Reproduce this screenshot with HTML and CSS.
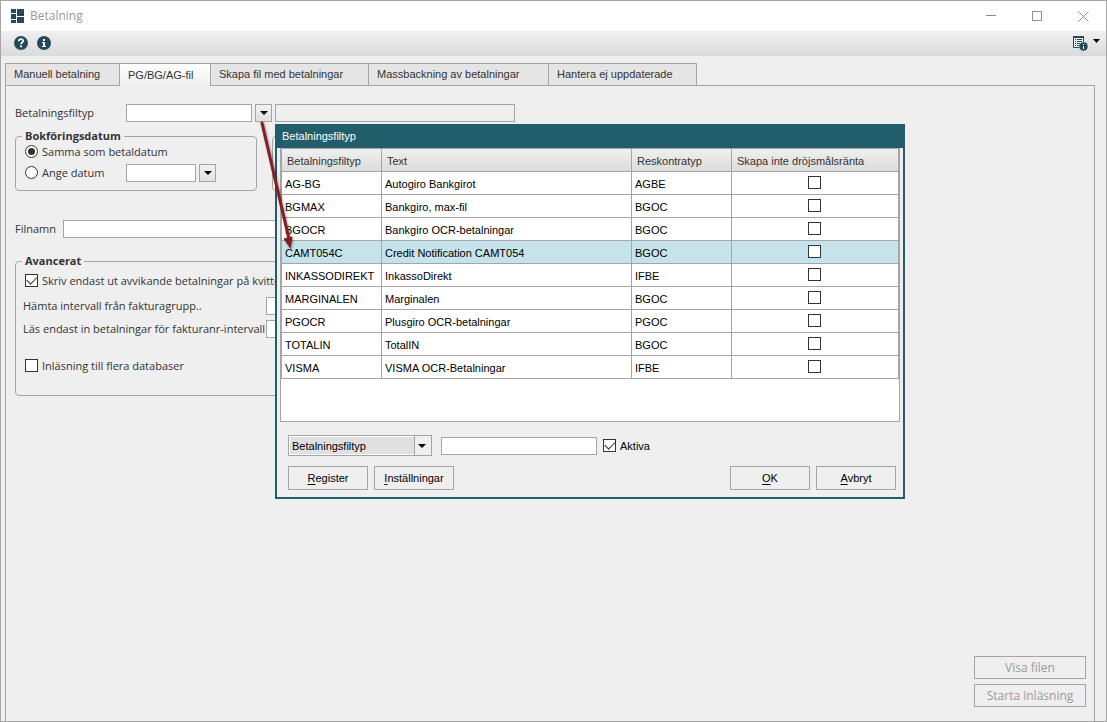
FILE: index.html
```html
<!DOCTYPE html>
<html lang="sv">
<head>
    <meta charset="UTF-8">
    <meta name="viewport" content="width=device-width, initial-scale=1.0">
    <title>Betalning</title>
    <link rel="stylesheet" href="styles.css">
</head>
<body>
    <div class="window">
        <header class="titlebar">
            <svg class="app-icon" width="13" height="14" viewBox="0 0 13 14" fill="#24495a">
                <path d="M0 0h5v4H0zM0 5h5v5H0zM0 11h5v3H0zM6 0h7v7H6zM6 8h7v6H6z"/>
            </svg>
            <h1 class="window-title">Betalning</h1>
            <div class="window-buttons">
                <button class="window-button" aria-label="Minimera">
                    <svg width="11" height="11" viewBox="0 0 11 11" stroke="#8c8c8c" fill="none"><path d="M0 4.5h10"/></svg>
                </button>
                <button class="window-button" aria-label="Maximera">
                    <svg width="11" height="11" viewBox="0 0 11 11" stroke="#8c8c8c" fill="none"><path d="M.5 .5h9v9h-9z"/></svg>
                </button>
                <button class="window-button" aria-label="Stäng">
                    <svg width="11" height="11" viewBox="0 0 11 11" stroke="#8c8c8c" fill="none"><path d="M.5 .5l10 10M10.5 .5l-10 10"/></svg>
                </button>
            </div>
        </header>

        <div class="toolbar">
            <button class="tool-button" aria-label="Hjälp">
                <svg width="14" height="14" viewBox="0 0 14 14">
                    <circle cx="7" cy="7" r="7" fill="#24495a"/>
                    <path d="M4.8 5.3c0-3 4.4-2.8 4.4-.3 0 1.5-2.2 1.5-2.2 3.2" fill="none" stroke="#fff" stroke-width="1.7"/>
                    <path d="M6 9.5h2v1.7H6z" fill="#fff"/>
                </svg>
            </button>
            <button class="tool-button" aria-label="Information">
                <svg width="14" height="14" viewBox="0 0 14 14">
                    <circle cx="7" cy="7" r="7" fill="#24495a"/>
                    <path d="M6 3h2v2H6zM5 6h3v4h1v1H5v-1h1V7H5z" fill="#fff"/>
                </svg>
            </button>
            <button class="tool-button tool-menu" aria-label="Visa logg">
                <svg width="15" height="15" viewBox="0 0 15 15">
                    <path d="M.5 1v10.5h10V1" fill="#f2f2f2" stroke="#24495a"/>
                    <path d="M0 0h11v2H0z" fill="#24495a"/>
                    <path d="M2 3.5h1M4 3.5h5M2 5.5h1M4 5.5h5M2 7.5h1M4 7.5h4M2 9.5h1M4 9.5h3" stroke="#24495a"/>
                    <circle cx="10.5" cy="10.5" r="4.5" fill="#24495a" stroke="#e2e2e2" stroke-width=".5"/>
                    <path d="M10 8h1v1h-1zM10 10h1v3h-1z" fill="#fff"/>
                </svg>
                <svg class="menu-arrow" width="7" height="4" viewBox="0 0 7 4"><path d="M0 0h7L3.5 4z"/></svg>
            </button>
        </div>

        <nav class="tabs">
            <button class="tab tab-manual">Manuell betalning</button>
            <button class="tab tab-file active">PG/BG/AG-fil</button>
            <button class="tab tab-create">Skapa fil med betalningar</button>
            <button class="tab tab-mass">Massbackning av betalningar</button>
            <button class="tab tab-pending">Hantera ej uppdaterade</button>
        </nav>

        <main class="pane">
            <div class="row">
                <label class="type-label" for="file-type">Betalningsfiltyp</label>
                <input class="field type-field" type="text" id="file-type">
                <button class="drop" id="open-types" aria-label="Välj betalningsfiltyp"></button>
                <input class="field type-name" type="text" aria-label="Namn på filtyp" readonly>
            </div>

            <div class="groups">
                <fieldset class="group date-group">
                    <legend>Bokföringsdatum</legend>
                    <div class="option">
                        <input class="radio" type="radio" name="date" id="same-date" checked>
                        <label for="same-date">Samma som betaldatum</label>
                    </div>
                    <div class="option">
                        <input class="radio" type="radio" name="date" id="set-date">
                        <label class="date-label" for="set-date">Ange datum</label>
                        <div class="row">
                            <input class="field date-field" type="text" aria-label="Datum">
                            <button class="drop" aria-label="Välj datum"></button>
                        </div>
                    </div>
                </fieldset>
                <fieldset class="group side-group"></fieldset>
            </div>

            <div class="row file-row">
                <label class="file-label" for="file-name">Filnamn</label>
                <input class="field file-field" type="text" id="file-name">
            </div>

            <fieldset class="group advanced">
                <legend>Avancerat</legend>
                <div class="option">
                    <input class="check" type="checkbox" id="deviating" checked>
                    <label for="deviating">Skriv endast ut avvikande betalningar på kvittens</label>
                </div>
                <div class="ranges">
                    <div class="range">
                        <label class="range-label" for="group-from">Hämta intervall från fakturagrupp..</label>
                        <input class="field" type="text" id="group-from">
                    </div>
                    <div class="range">
                        <label class="range-label" for="number-from">Läs endast in betalningar för fakturanr-intervall</label>
                        <input class="field" type="text" id="number-from">
                    </div>
                </div>
                <div class="option">
                    <input class="check" type="checkbox" id="databases">
                    <label for="databases">Inläsning till flera databaser</label>
                </div>
            </fieldset>

            <div class="actions">
                <button class="button" disabled>Visa filen</button>
                <button class="button" disabled>Starta inläsning</button>
            </div>
        </main>
    </div>

    <section class="dialog" role="dialog" aria-labelledby="dialog-title">
        <h2 class="dialog-title" id="dialog-title">Betalningsfiltyp</h2>
        <div class="list">
            <table class="types">
                <colgroup>
                    <col class="col-type">
                    <col class="col-text">
                    <col class="col-ledger">
                    <col>
                </colgroup>
                <thead>
                    <tr>
                        <th>Betalningsfiltyp</th>
                        <th>Text</th>
                        <th>Reskontratyp</th>
                        <th>Skapa inte dröjsmålsränta</th>
                    </tr>
                </thead>
                <tbody>
                    <tr>
                        <td>AG-BG</td><td>Autogiro Bankgirot</td><td>AGBE</td>
                        <td><input class="check" type="checkbox" aria-label="Skapa inte dröjsmålsränta, AG-BG"></td>
                    </tr>
                    <tr>
                        <td>BGMAX</td><td>Bankgiro, max-fil</td><td>BGOC</td>
                        <td><input class="check" type="checkbox" aria-label="Skapa inte dröjsmålsränta, BGMAX"></td>
                    </tr>
                    <tr>
                        <td>BGOCR</td><td>Bankgiro OCR-betalningar</td><td>BGOC</td>
                        <td><input class="check" type="checkbox" aria-label="Skapa inte dröjsmålsränta, BGOCR"></td>
                    </tr>
                    <tr class="selected">
                        <td>CAMT054C</td><td>Credit Notification CAMT054</td><td>BGOC</td>
                        <td><input class="check" type="checkbox" aria-label="Skapa inte dröjsmålsränta, CAMT054C"></td>
                    </tr>
                    <tr>
                        <td>INKASSODIREKT</td><td>InkassoDirekt</td><td>IFBE</td>
                        <td><input class="check" type="checkbox" aria-label="Skapa inte dröjsmålsränta, INKASSODIREKT"></td>
                    </tr>
                    <tr>
                        <td>MARGINALEN</td><td>Marginalen</td><td>BGOC</td>
                        <td><input class="check" type="checkbox" aria-label="Skapa inte dröjsmålsränta, MARGINALEN"></td>
                    </tr>
                    <tr>
                        <td>PGOCR</td><td>Plusgiro OCR-betalningar</td><td>PGOC</td>
                        <td><input class="check" type="checkbox" aria-label="Skapa inte dröjsmålsränta, PGOCR"></td>
                    </tr>
                    <tr>
                        <td>TOTALIN</td><td>TotalIN</td><td>BGOC</td>
                        <td><input class="check" type="checkbox" aria-label="Skapa inte dröjsmålsränta, TOTALIN"></td>
                    </tr>
                    <tr>
                        <td>VISMA</td><td>VISMA OCR-Betalningar</td><td>IFBE</td>
                        <td><input class="check" type="checkbox" aria-label="Skapa inte dröjsmålsränta, VISMA"></td>
                    </tr>
                </tbody>
            </table>
        </div>
        <div class="filter">
            <select class="filter-select" aria-label="Sök på">
                <option>Betalningsfiltyp</option>
                <option>Text</option>
                <option>Reskontratyp</option>
            </select>
            <input class="field filter-field" type="text" aria-label="Sök">
            <input class="check" type="checkbox" id="active-only" checked>
            <label for="active-only">Aktiva</label>
        </div>
        <div class="dialog-buttons">
            <button class="button"><u>R</u>egister</button>
            <button class="button"><u>I</u>nställningar</button>
            <button class="button push"><u>O</u>K</button>
            <button class="button"><u>A</u>vbryt</button>
        </div>
    </section>

    <svg class="pointer" width="40" height="132" viewBox="0 0 40 132">
        <path d="M4 3L31 119" stroke="#8c1a22" stroke-width="3" stroke-linecap="round"/>
        <path d="M25.5 118.5l9-2L32.5 129z" fill="#8c1a22"/>
    </svg>
</body>
</html>
```
FILE: styles.css
```css
* {
    box-sizing: border-box;
}

body {
    margin: 0;
    position: relative;
    font-family: "Open Sans", "Noto Sans", sans-serif;
    font-size: 11px;
    line-height: 16px;
    color: #333;
    background-color: #efefef;
}

button, input, select {
    margin: 0;
    padding: 0;
    font: inherit;
    color: inherit;
    border-radius: 0;
}

label {
    white-space: nowrap;
}

.window {
    display: flex;
    flex-direction: column;
    min-height: 100vh;
    border: 1px solid #a5a5a5;
}

/* Title bar and toolbar */
.titlebar {
    display: flex;
    align-items: center;
    height: 30px;
    padding-left: 10px;
    background-color: #fff;
}

.window-title {
    margin: 0 0 0 6px;
    font-size: 12px;
    font-weight: 400;
    color: #999;
}

.window-buttons {
    display: flex;
    margin-left: auto;
}

.window-button {
    display: flex;
    align-items: center;
    justify-content: center;
    width: 46px;
    height: 28px;
    border: none;
    background: none;
}

.toolbar {
    display: flex;
    align-items: center;
    gap: 9px;
    height: 25px;
    padding: 0 6px 1px 13px;
    background: linear-gradient(#f0f0f0, #dadada);
}

.tool-button {
    display: flex;
    border: none;
    background: none;
}

.tool-menu {
    gap: 5px;
    margin-left: auto;
}

.menu-arrow {
    margin-top: 3px;
}

/* Tabs */
.tabs {
    display: flex;
    margin: 7px 11px 0 4px;
}

.tab {
    height: 23px;
    padding: 0 8px 2px;
    border: 1px solid #a5a5a5;
    border-right: none;
    background-color: #e5e5e5;
    font-family: "Liberation Sans", Arial, sans-serif;
    text-align: left;
    white-space: nowrap;
}

.tab:last-child {
    border-right: 1px solid #a5a5a5;
}

.tab.active {
    position: relative;
    padding-bottom: 0;
    border-bottom: none;
    background: linear-gradient(#fff, #efefef);
}

.tab-manual { width: 114px; }
.tab-file { width: 91px; }
.tab-create { width: 158px; }
.tab-mass { width: 180px; }
.tab-pending { width: 149px; }

.pane {
    display: flex;
    flex-direction: column;
    flex: 1;
    margin: -1px 11px 0 4px;
    padding: 18px 8px 14px 9px;
    border: 1px solid #a5a5a5;
    border-bottom: none;
}

/* Form */
.row {
    display: flex;
    align-items: center;
    gap: 3px;
}

.field {
    width: 126px;
    height: 18px;
    padding: 0 3px;
    border: 1px solid #a5a5a5;
    background-color: #fff;
}

.field:read-only {
    background-color: #efefef;
}

.drop {
    width: 17px;
    height: 18px;
    border: 1px solid #a5a5a5;
    background: url("data:image/svg+xml,%3Csvg xmlns='http://www.w3.org/2000/svg' width='8' height='4'%3E%3Cpath d='M0 0h8L4 4z'/%3E%3C/svg%3E") center no-repeat, linear-gradient(#f2f2f2, #e0e0e0);
}

.type-label {
    width: 108px;
}

.type-name {
    width: 240px;
}

.groups {
    display: flex;
    gap: 15px;
    margin-top: 6px;
}

.group {
    margin: 0;
    padding: 0 7px;
    border: 1px solid #a5a5a5;
    border-radius: 4px;
}

.group legend {
    margin-left: -1px;
    padding: 0 3px;
    font-weight: 700;
}

.option {
    display: flex;
    align-items: center;
    height: 21px;
    gap: 4px;
    padding-left: 2px;
}

.date-group {
    width: 242px;
    height: 63px;
}

.date-group legend {
    margin-bottom: -3px;
}

.side-group {
    flex: 1;
    max-width: 400px;
    height: 55px;
    margin-top: 8px;
}

.date-label {
    width: 80px;
}

.date-field {
    width: 70px;
}

.file-row {
    margin-top: 29px;
}

.file-label {
    width: 45px;
}

.file-field {
    width: 480px;
}

.advanced {
    max-width: 657px;
    height: 143px;
    margin-top: 15px;
}

.advanced legend {
    margin-bottom: 1px;
}

.ranges {
    margin: 3px 0 15px;
}

.range {
    display: flex;
    align-items: center;
    height: 23px;
}

.range-label {
    width: 243px;
}

.check, .radio {
    display: grid;
    place-content: center;
    flex: none;
    width: 13px;
    height: 13px;
    appearance: none;
    border: 1px solid #333;
    background-color: #fff;
}

.check:checked::before {
    content: "";
    width: 9px;
    height: 5px;
    border: solid #333;
    border-width: 0 0 1px 1px;
    transform: translateY(-2px) rotate(-45deg);
}

.radio {
    border-radius: 50%;
}

.radio:checked::before {
    content: "";
    width: 7px;
    height: 7px;
    border-radius: 50%;
    background-color: #333;
}

.button {
    width: 80px;
    height: 24px;
    border: 1px solid #a5a5a5;
    background-color: #efefef;
}

.actions {
    display: flex;
    flex-direction: column;
    gap: 5px;
    margin: auto 0 0 auto;
}

.actions .button {
    width: 112px;
    height: 23px;
    font-size: 12px;
    color: #999;
}

/* Dialog */
.dialog {
    position: absolute;
    top: 124px;
    left: 275px;
    width: 630px;
    padding-bottom: 7px;
    border: 2px solid #225d6b;
    background-color: #efefef;
    font-family: "Liberation Sans", Arial, sans-serif;
    color: #000;
}

.dialog-title {
    height: 22px;
    margin: 0;
    padding: 2px 5px;
    font-size: 11px;
    font-weight: 400;
    color: #fff;
    background-color: #225d6b;
}

.list {
    height: 274px;
    margin: 0 3px;
    border: 1px solid #a5a5a5;
    background-color: #fff;
}

.types {
    width: 100%;
    table-layout: fixed;
    border-collapse: separate;
    border-spacing: 0;
    border-left: 1px solid #a5a5a5;
}

.col-type { width: 100px; }
.col-text { width: 250px; }
.col-ledger { width: 100px; }

.types th, .types td {
    height: 23px;
    padding: 2px 3px 0;
    border: solid #a5a5a5;
    border-width: 0 1px 1px 0;
    text-align: left;
    font-weight: 400;
    white-space: nowrap;
}

.types th {
    padding: 2px 5px 0;
    color: #333;
    background: linear-gradient(#f0f0f0, #dcdcdc);
}

.types td:last-child {
    padding: 0 4px 1px 3px;
}

.types .check {
    margin: 0 auto;
}

.selected {
    background-color: #c5e3ea;
}

.filter {
    display: flex;
    align-items: center;
    margin-top: 13px;
    padding: 0 11px;
}

.filter-select {
    width: 144px;
    height: 21px;
    padding-left: 3px;
    appearance: none;
    border: 1px solid #a5a5a5;
    background:
        url("data:image/svg+xml,%3Csvg xmlns='http://www.w3.org/2000/svg' width='8' height='4'%3E%3Cpath d='M0 0h8L4 4z'/%3E%3C/svg%3E") right 5px center no-repeat,
        linear-gradient(#a5a5a5, #a5a5a5) right 16px center / 1px 100% no-repeat,
        linear-gradient(#efefef, #efefef) right / 16px 100% no-repeat,
        linear-gradient(#e0e0e0, #e0e0e0) 1px center / 124px 17px no-repeat,
        #fff;
}

.filter-field {
    width: 156px;
    margin: 0 6px 0 9px;
}

.filter label {
    margin-left: 4px;
}

.dialog-buttons {
    display: flex;
    gap: 6px;
    margin-top: 10px;
    padding: 0 7px 0 11px;
}

.push {
    margin-left: auto;
}

u {
    text-underline-offset: 2px;
}

/* Arrow from the drop-down button to the selected row */
.pointer {
    position: absolute;
    top: 120px;
    left: 258px;
    filter: drop-shadow(1px 1px 1px rgba(0, 0, 0, 0.4));
    pointer-events: none;
}
```
